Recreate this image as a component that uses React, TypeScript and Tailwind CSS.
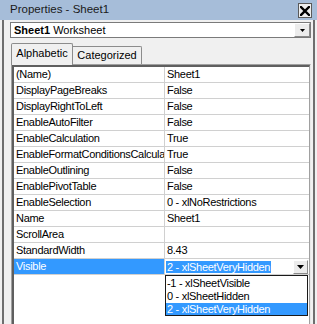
import React from "react";

const rows: [string, string][] = [
  ["(Name)", "Sheet1"],
  ["DisplayPageBreaks", "False"],
  ["DisplayRightToLeft", "False"],
  ["EnableAutoFilter", "False"],
  ["EnableCalculation", "True"],
  ["EnableFormatConditionsCalculation", "True"],
  ["EnableOutlining", "False"],
  ["EnablePivotTable", "False"],
  ["EnableSelection", "0 - xlNoRestrictions"],
  ["Name", "Sheet1"],
  ["ScrollArea", ""],
  ["StandardWidth", "8.43"],
];

function Arrow({ w = 7 }: { w?: number }) {
  const h = Math.ceil(w / 2) + 0;
  return (
    <svg width={w} height={h} viewBox={`0 0 ${w} ${h}`}>
      <polygon points={`0,0 ${w},0 ${w / 2},${h}`} fill="#000" />
    </svg>
  );
}

export default function App() {
  return (
    <div
      className="w-[317px] h-[324px] overflow-hidden bg-[#f0f0f0] text-black relative"
      style={{ fontFamily: '"Liberation Sans", Arial, sans-serif' }}
    >
      {/* Title bar */}
      <div className="h-[20px] bg-[#a6bdd9] flex items-center justify-between pl-[10px] pr-[5px]">
        <span className="text-[11.5px] leading-none text-[#1a1a1a]">Properties - Sheet1</span>
        <div className="w-[14px] h-[15px] bg-[#eeeeee] border border-[#5a5a5a] flex items-center justify-center mt-[1px]">
          <svg width="10" height="10" viewBox="0 0 10 10">
            <path d="M1 1 L9 9 M9 1 L1 9" stroke="#000" strokeWidth="2.4" strokeLinecap="square" />
          </svg>
        </div>
      </div>

      {/* Body */}
      <div className="h-[304px] ml-[2px] mr-[2px] border-l-2 border-r-2 border-[#6e6e6e] pl-[6px] pr-[2px] flex flex-col">
        {/* Combo */}
        <div className="mt-[2px] h-[16px] bg-white border border-[#7a7a7a] flex items-center">
          <div className="flex-1 pl-[3px] text-[11px] leading-none whitespace-nowrap">
            <span className="font-bold">Sheet1</span> Worksheet
          </div>
          <div className="w-[16px] h-[14px] bg-[#ececec] border-l border-t border-white border-r border-b border-r-[#8a8a8a] border-b-[#8a8a8a] flex items-center justify-center">
            <Arrow w={5} />
          </div>
        </div>

        {/* Tabs */}
        <div className="mt-[4px] h-[22px] flex items-end pl-[1px]">
          <div className="w-[62px] h-[22px] border-l border-t border-r border-[#8c8c8c] rounded-t-[2px] bg-[#f0f0f0] flex items-center justify-center text-[11px] leading-none pb-[2px] relative z-10 -mb-[1px]">
            Alphabetic
          </div>
          <div className="w-[69px] h-[18px] border-t border-r border-[#8c8c8c] rounded-tr-[2px] flex items-center justify-center text-[11px] leading-none">
            Categorized
          </div>
        </div>

        {/* Grid */}
        <div className="flex-1 border-t border-l border-[#a0a0a0] border-r border-r-[#e8e8e8] ml-[1px] flex flex-col min-h-0">
          <div className="flex-1 border-t-2 border-l-2 border-[#5f5f5f] border-r border-r-[#a0a0a0] bg-white flex flex-col relative min-h-0 text-[11px] tracking-[-0.3px]">
            {rows.map(([n, v]) => (
              <div key={n} className="h-[16px] flex border-b border-[#d0d0d0]">
                <div className="w-[151px] border-r border-[#d0d0d0] pl-[2px] overflow-hidden whitespace-nowrap flex items-center">
                  {n}
                </div>
                <div className="flex-1 pl-[2px] overflow-hidden whitespace-nowrap flex items-center">{v}</div>
              </div>
            ))}
            {/* Visible row */}
            <div className="h-[16px] flex border-b border-[#d0d0d0]">
              <div className="w-[151px] border-r border-[#d0d0d0] pl-[2px] bg-[#3399ff] text-white flex items-center">
                Visible
              </div>
              <div className="flex-1 pl-[1px] flex items-center justify-between pr-[1px]">
                <span className="bg-[#3399ff] text-white px-[1px] leading-[12px]">2 - xlSheetVeryHidden</span>
                <div className="w-[15px] h-[14px] bg-[#ececec] border-l border-t border-white border-r border-b border-r-[#8a8a8a] border-b-[#8a8a8a] flex items-center justify-center">
                  <Arrow w={7} />
                </div>
              </div>
            </div>

            {/* Dropdown list */}
            <div className="absolute left-[151px] top-[208px] w-[143px] h-[41px] bg-white border border-[#1a1a1a] flex flex-col pt-[1px]">
              <div className="h-[13px] pl-[1px] flex items-center whitespace-nowrap">-1 - xlSheetVisible</div>
              <div className="h-[13px] pl-[1px] flex items-center whitespace-nowrap">0 - xlSheetHidden</div>
              <div className="h-[12px] pl-[1px] flex items-center whitespace-nowrap bg-[#3399ff] text-white">
                2 - xlSheetVeryHidden
              </div>
            </div>
          </div>
        </div>
      </div>
    </div>
  );
}
